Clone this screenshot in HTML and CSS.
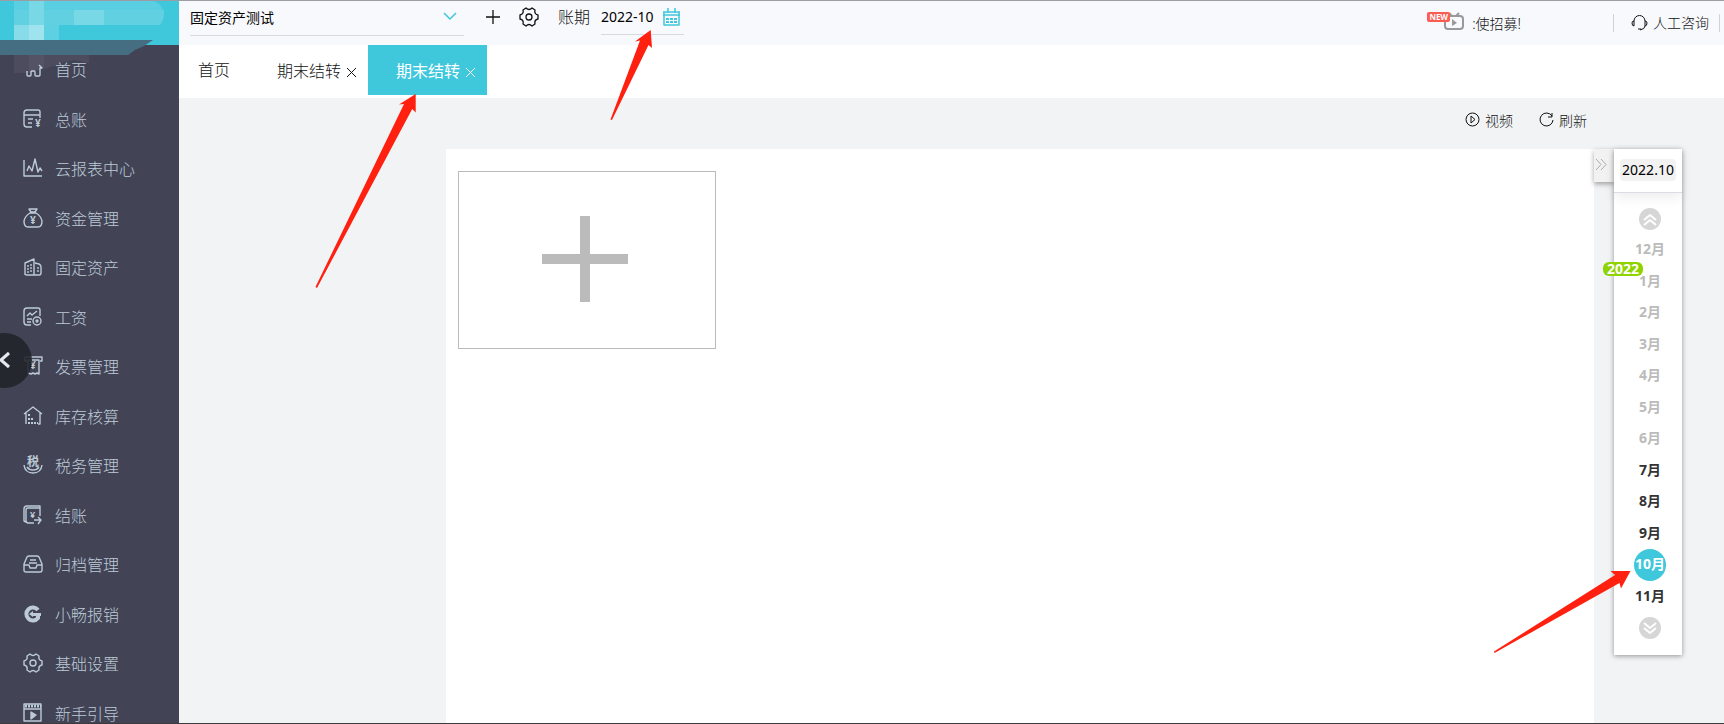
FILE: index.html
```html
<!DOCTYPE html>
<html lang="zh-CN">
<head>
    <meta charset="UTF-8">
    <meta name="viewport" content="width=device-width, initial-scale=1.0">
    <title>期末结转</title>
    <link rel="stylesheet" href="styles.css">
</head>
<body>

    <aside class="sidebar">
        <div class="brand">
            <svg class="brand-art" width="179" height="76" viewBox="0 0 179 76">
                <g fill="#fff">
                    <path opacity=".14" d="M14 0h15v10H14zM44 0h100q16 0 19 10H44z"/>
                    <path opacity=".3" d="M29 0h15v10H29zM29 10h15v15H29zM74 10h30v15H74z"/>
                    <path opacity=".18" d="M14 10h15v15H14zM44 10h30v15H44zM104 10h15v15h-15zM119 10h45q1 9-4 15h-41z"/>
                    <path opacity=".38" d="M14 25h15v15H14z"/>
                    <path opacity=".5" d="M29 25h15v15H29z"/>
                    <path opacity=".16" d="M44 25h15v15H44z"/>
                    <path opacity=".05" d="M14 55h15v18H14zM44 55h15v9l-15 5zM59 55h30v8l-15-3-15 3z"/>
                    <path opacity=".09" d="M29 55h15v13l-15 5z"/>
                </g>
                <path fill="#456e82" d="M0 40h153l-9 6-9 4-7 5H0z"/>
            </svg>
        </div>
        <nav class="menu">
            <a href="#"><svg viewBox="0 0 20 20"><path d="M4 12v4q0 1 1 1h2q1 0 1-1v-3q0-1 1-1h2q1 0 1 1v3q0 1 1 1h3q1 0 1-1V9h2l-3-3"/></svg>首页</a>
            <a href="#"><svg viewBox="0 0 20 20"><path d="M9 18H4q-3 0-3-3V4q0-3 3-3h11q2 0 2 2v6M1 6h16M5 10h5M5 14h4"/><text x="12" y="18" font-size="10">¥</text></svg>总账</a>
            <a href="#"><svg viewBox="0 0 20 20"><path d="M1 2v16h18M4 13l2-5 3 5 3-12 3 13 2-4 2 3"/></svg>云报表中心</a>
            <a href="#"><svg viewBox="0 0 20 20"><path d="M6 1h8l-2 3H8zM7 5h6q5 3 6 8 0 6-4 6H5q-4 0-4-6 1-5 6-8z"/><text x="7" y="16" font-size="10">¥</text></svg>资金管理</a>
            <a href="#"><svg viewBox="0 0 20 20"><path d="M2 18V6l9-4v16H4q-2 0-2-2M12 6l4 1q2 1 2 3v6q0 2-2 2h-5"/><path stroke-dasharray="2 1" d="M5 8v8M8 7v9M15 10v6"/></svg>固定资产</a>
            <a href="#"><svg viewBox="0 0 20 20"><path d="M8 18H4q-3 0-3-3V4q0-3 3-3h11q2 0 2 2v6M4 9l3-3 2 2 5-4M4 12h5M4 15h4"/><circle cx="14" cy="14" r="4"/><circle cx="14" cy="14" r="1"/></svg>工资</a>
            <a href="#"><svg viewBox="0 0 20 20"><path d="M4 5H2V1h17v4h-2M5 4h11v14l-2-1-2 1-2-1-2 1-3-1z"/><text x="7" y="13" font-size="10">¥</text></svg>发票管理</a>
            <a href="#"><svg viewBox="0 0 20 20"><path d="M1 8l9-7 9 7M3 7v11M17 7v11h-2"/><path stroke-width="2" stroke-dasharray="2 1" d="M5 17h10M5 13h6M5 9h2"/></svg>库存核算</a>
            <a href="#"><svg viewBox="0 0 20 20"><path d="M1 10q1 8 9 8t9-8M4 12q2 3 6 3t6-3"/><text x="4" y="11" font-size="12">税</text></svg>税务管理</a>
            <a href="#"><svg viewBox="0 0 20 20"><path d="M11 18H6q-3 0-3-2V5q0-2 2-2h12v8M17 3V1H4Q1 1 1 4v12l4 2M11 15h7l-3-3M18 15l-3 4"/><text x="7" y="13" font-size="9">¥</text></svg>结账</a>
            <a href="#"><svg viewBox="0 0 20 20"><path d="M1 10l3-7q1-1 2-1h8q1 0 2 1l3 7v6q0 2-2 2H3q-2 0-2-2zM1 11h5l1 3h6l1-3h5M7 6h6M6 9h8"/></svg>归档管理</a>
            <a href="#"><svg viewBox="0 0 20 20"><path stroke-width="4" d="M15 6a6.500 6.500 0 1 0 0 8v-3"/><path stroke="none" fill="currentColor" d="M6 10l4-3v2h8v3h-8v1z"/></svg>小畅报销</a>
            <a href="#"><svg viewBox="0 0 20 20"><path d="M19 8v4Q15 13 16 17L13 19Q10 16 7 19L4 17Q5 13 1 12V8Q5 7 4 3L7 1Q10 4 13 1L16 3Q15 7 19 8z"/><circle cx="10" cy="10" r="3"/></svg>基础设置</a>
            <a href="#"><svg viewBox="0 0 20 20"><path d="M1 1h17v17H1zM1 6h17"/><path stroke-width="3" stroke-dasharray="2 1" d="M2 3h16"/><path fill="currentColor" d="M8 9v7l5-4z"/></svg>新手引导</a>
        </nav>
        <button class="back" aria-label="返回">
            <svg width="12" height="18" viewBox="0 0 12 18"><path d="M10 2L2 9l8 7"/></svg>
        </button>
    </aside>

    <div class="page">
        <header class="topbar">
            <div class="company">
                <select aria-label="账套">
                    <option>固定资产测试</option>
                </select>
                <svg width="14" height="8" viewBox="0 0 14 8"><path d="M1 1l6 6 6-6"/></svg>
            </div>
            <button class="add" aria-label="新增"><svg width="14" height="14" viewBox="0 0 14 14"><path d="M7 0v14M0 7h14"/></svg></button>
            <button class="gear" aria-label="设置"><svg width="20" height="20" viewBox="0 0 20 20"><path d="M19 8v4Q15 13 16 17L13 19Q10 16 7 19L4 17Q5 13 1 12V8Q5 7 4 3L7 1Q10 4 13 1L16 3Q15 7 19 8z"/><circle cx="10" cy="10" r="3"/></svg></button>
            <label class="period-label" for="period">账期</label>
            <div class="period">
                <input id="period" type="text" value="2022-10">
                <svg width="17" height="18" viewBox="0 0 17 18"><path d="M1 4v13h15V4M0 4h17M0 7h17M5 0v5M12 0v5"/><path stroke-width="2" stroke-dasharray="3 1" d="M3 11h11M3 14h11"/></svg>
            </div>
            <a class="recruit" href="#">
                <span class="new">NEW</span>
                <svg width="20" height="18" viewBox="0 0 20 18"><rect x="1" y="4" width="18" height="13" rx="3"/><path d="M5 1l3 3M15 1l-3 3"/><path fill="#999" stroke="none" d="M8 7v7l5-3z"/></svg>
                <span class="recruit-text">:使招募!</span>
            </a>
            <a class="service" href="#">
                <svg width="17" height="17" viewBox="0 0 17 17"><path d="M3 7a5.500 5.500 0 0 1 11 0M3 7v5q-2 0-2-3 0-2 2-2zM14 7v5q2 0 2-3 0-2-2-2zM14 12q0 3-5 4M7 15h3"/></svg>
                人工咨询
            </a>
        </header>

        <div class="tabs">
            <a class="home" href="#">首页</a>
            <div class="tab">
                <a href="#">期末结转</a>
                <button aria-label="关闭"><svg width="9" height="9" viewBox="0 0 9 9"><path d="M0 0l9 9M9 0L0 9"/></svg></button>
            </div>
            <div class="tab active">
                <a href="#">期末结转</a>
                <button aria-label="关闭"><svg width="9" height="9" viewBox="0 0 9 9"><path d="M0 0l9 9M9 0L0 9"/></svg></button>
            </div>
        </div>

        <div class="toolbar">
            <button><svg width="15" height="15" viewBox="0 0 15 15"><circle cx="7.500" cy="7.500" r="6.500"/><path d="M6 4v7l4-3.500z"/></svg>视频</button>
            <button><svg width="15" height="15" viewBox="0 0 15 15"><path d="M13 4a6.500 6.500 0 1 0 1 4M13 1v4H9"/></svg>刷新</button>
        </div>

        <div class="content">
            <main class="panel">
                <button class="add-card" aria-label="新增结转">
                    <svg width="86" height="86" viewBox="0 0 86 86"><path d="M43 0v86M0 43h86"/></svg>
                </button>
            </main>
            <button class="fold" aria-label="收起"><svg width="12" height="13" viewBox="0 0 12 13"><path d="M1 1l5 5.500-5 5.500M6 1l5 5.500L6 12"/></svg></button>
            <aside class="months">
                <div class="current"><span>2022.10</span></div>
                <span class="year">2022</span>
                <button class="scroll" aria-label="向前"><svg width="14" height="13" viewBox="0 0 14 13"><path d="M1 7l6-5 6 5M1 12l6-5 6 5"/></svg></button>
                <div class="list">
                    <button>12月</button>
                    <button>1月</button>
                    <button>2月</button>
                    <button>3月</button>
                    <button>4月</button>
                    <button>5月</button>
                    <button>6月</button>
                    <button class="open">7月</button>
                    <button class="open">8月</button>
                    <button class="open">9月</button>
                    <button class="selected"><span>10月</span></button>
                    <button class="open">11月</button>
                </div>
                <button class="scroll" aria-label="向后"><svg width="14" height="13" viewBox="0 0 14 13"><path d="M1 1l6 5 6-5M1 6l6 5 6-5"/></svg></button>
            </aside>
        </div>
    </div>

    <!-- guide arrows -->
    <svg class="arrow arrow-tab" width="102" height="196" viewBox="315 93 102 196"><path d="M315.500 287L404 104l-5 .5L415.700 94v18.500l-3.500-3.500L317 288z"/></svg>
    <svg class="arrow arrow-period" width="44" height="92" viewBox="610 29 44 92"><path d="M610.500 119.500L640 40.500l-5 1L650.700 30l1.300 18-3.500-3L612 120z"/></svg>
    <svg class="arrow arrow-month" width="138" height="84" viewBox="1493 570 138 84"><path d="M1494 651.500L1615 575l-4.500-4h20l-9.500 17.500-1.500-5.500L1494.500 653z"/></svg>

</body>
</html>
```
FILE: styles.css
```css
* {
    margin: 0;
    padding: 0;
    box-sizing: border-box;
}

body {
    display: flex;
    position: relative;
    height: 100vh;
    overflow: hidden;
    border-top: 1px solid #9d9da5;
    border-bottom: 1px solid #3c3c40;
    font-family: "Noto Sans", "Noto Sans CJK SC", sans-serif;
    font-size: 14px;
    font-weight: 300;
    color: #111;
    background-color: #f2f3f5;
}

a {
    color: inherit;
    text-decoration: none;
}

button, input, select {
    border: none;
    background: none;
    font: inherit;
    color: inherit;
}

button {
    display: flex;
    align-items: center;
    justify-content: center;
    cursor: pointer;
}

svg {
    display: block;
    flex: none;
    fill: none;
    stroke: currentColor;
    stroke-linejoin: round;
}

/* sidebar */
.sidebar {
    position: relative;
    flex: none;
    width: 179px;
    background-color: #434356;
}

.brand {
    position: relative;
    height: 44px;
    background-color: #3fc7dc;
}

.brand-art {
    position: absolute;
    top: -1px;
    left: 0;
    stroke: none;
}

.menu a {
    display: flex;
    align-items: center;
    gap: 12px;
    height: 50px;
    padding: 0 0 2px 23px;
    font-size: 16px;
    color: #bccbd7;
}

.menu a:nth-child(even) {
    height: 49px;
}

.menu svg {
    width: 20px;
    height: 20px;
    overflow: visible;
    stroke-width: 1.4;
}

.menu text {
    fill: currentColor;
    stroke: none;
    font-weight: 700;
}

.back {
    position: absolute;
    top: 332px;
    left: -23px;
    width: 55px;
    height: 55px;
    padding: 0 0 2px 1px;
    border-radius: 50%;
    background-color: rgba(34, 37, 42, 0.9);
    color: #e6e9ec;
}

.back svg {
    stroke-width: 3;
}

/* top bar */
.page {
    display: flex;
    flex: 1;
    flex-direction: column;
    min-width: 0;
}

.topbar {
    display: flex;
    align-items: flex-start;
    height: 44px;
    padding-left: 11px;
    background-color: #f8f9fd;
}

.company {
    position: relative;
    width: 274px;
    height: 35px;
    border-bottom: 1px solid #d8dae0;
}

.company select {
    width: 100%;
    height: 32px;
    appearance: none;
    color: #000;
    font-weight: 400;
}

.company svg {
    position: absolute;
    top: 11px;
    right: 7px;
    color: #3fc7dc;
    stroke-width: 1.5;
    pointer-events: none;
}

.add, .gear, .period-label {
    height: 32px;
}

.add {
    margin-left: 22px;
}

.gear {
    margin-left: 19px;
}

.add svg, .gear svg {
    stroke-width: 1.3;
}

.period-label {
    margin-left: 19px;
    font-size: 16px;
    line-height: 32px;
}

.period {
    display: flex;
    align-items: center;
    width: 83px;
    height: 34px;
    margin-left: 11px;
    padding-bottom: 2px;
    border-bottom: 1px solid #d8dae0;
    color: #3fc7dc;
}

.period input {
    width: 62px;
    color: #000;
    font-weight: 400;
}

.period svg {
    stroke-width: 1.5;
}

.recruit {
    display: flex;
    margin-left: auto;
    margin-right: 92px;
    padding-top: 11px;
}

.new {
    z-index: 1;
    height: 10px;
    margin-right: -6px;
    padding: 0 2px;
    border-radius: 2px;
    background-color: #fb5d52;
    color: #fff;
    font-size: 8px;
    font-weight: 700;
    line-height: 10px;
}

.recruit svg {
    color: #999;
    stroke-width: 2;
}

.recruit-text {
    margin-left: 8px;
    line-height: 24px;
}

.service {
    display: flex;
    align-items: center;
    gap: 5px;
    height: 18px;
    margin-top: 13px;
    margin-right: 4px;
    padding: 0 10px 2px 17px;
    border: solid #d0d2d8;
    border-width: 0 1px;
}

/* tabs */
.tabs {
    display: flex;
    height: 53px;
    font-size: 16px;
    background-color: #fff;
}

.home {
    width: 70px;
    padding-left: 19px;
    line-height: 50px;
}

.tab {
    display: flex;
    align-items: center;
    gap: 6px;
    width: 119px;
    height: 50px;
    padding-left: 28px;
}

.tab button {
    padding-top: 4px;
}

.tab.active {
    background-color: #3fc7dc;
    color: #fff;
    font-weight: 400;
}

.toolbar {
    display: flex;
    justify-content: flex-end;
    gap: 26px;
    height: 51px;
    padding: 0 137px 8px 0;
}

.toolbar button {
    gap: 5px;
}

/* content */
.content {
    display: flex;
    flex: 1;
    align-items: flex-start;
    padding: 0 42px 0 267px;
}

.panel {
    flex: 1;
    align-self: stretch;
    padding: 22px 12px;
    background-color: #fff;
}

.add-card {
    width: 258px;
    height: 178px;
    padding: 0 4px 2px 0;
    border: 1px solid #bbb;
    color: #bbb;
}

.add-card svg {
    stroke-width: 10;
}

.fold {
    width: 20px;
    height: 33px;
    padding: 0 6px 2px 0;
    background-color: #f2f2f2;
    box-shadow: 0 2px 5px rgba(0, 0, 0, 0.35);
    color: #aaa;
}

.months {
    position: relative;
    width: 68px;
    padding-bottom: 16px;
    background-color: #fff;
    box-shadow: 0 1px 5px rgba(0, 0, 0, 0.4);
}

.current {
    display: flex;
    align-items: center;
    justify-content: center;
    height: 44px;
    margin-bottom: 15px;
    padding-bottom: 2px;
    border-bottom: 1px solid #dcdce8;
    box-shadow: 0 4px 12px rgba(0, 0, 0, 0.08);
    color: #000;
    font-weight: 400;
}

.current span {
    padding: 0 2px;
    border-radius: 4px;
    background-color: #f2f2f2;
    line-height: 22px;
}

.year {
    position: absolute;
    top: 113px;
    left: -11px;
    width: 40px;
    border-radius: 6px;
    background-color: #8fd400;
    color: #fff;
    font-weight: 700;
    line-height: 14px;
    text-align: center;
}

.scroll {
    width: 22px;
    height: 22px;
    margin-left: 25px;
    border-radius: 50%;
    background-color: #d6d6d6;
    color: #fff;
}

.scroll svg {
    stroke-width: 2;
}

.list {
    padding: 2px 0 7px 4px;
}

.list button {
    width: 64px;
    height: 32px;
    color: #bbb;
    font-weight: 700;
}

.list button:nth-child(even) {
    height: 31px;
}

.list .open {
    color: #333;
}

.list .selected {
    align-items: flex-start;
    padding-top: 2px;
    color: #fff;
}

.selected span {
    flex: none;
    width: 32px;
    height: 32px;
    border-radius: 50%;
    background-color: #3fc7dc;
    line-height: 30px;
    white-space: nowrap;
}

/* arrows */
.arrow {
    position: absolute;
    z-index: 2;
    fill: #ff2010;
    stroke: none;
    pointer-events: none;
}

.arrow-tab {
    top: 92px;
    left: 315px;
}

.arrow-period {
    top: 28px;
    left: 610px;
}

.arrow-month {
    top: 569px;
    right: 93px;
}
```
